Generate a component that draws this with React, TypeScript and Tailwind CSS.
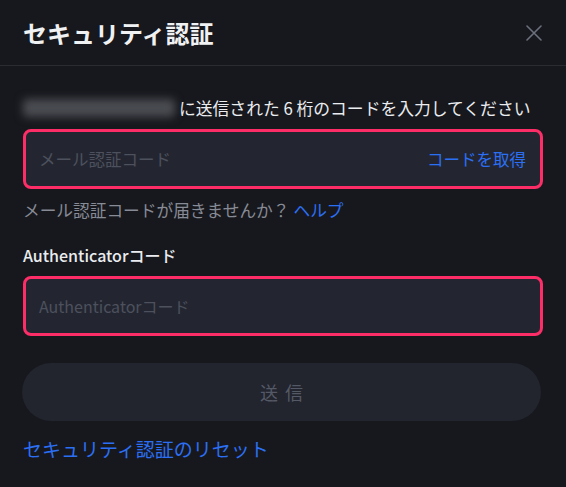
import React from "react";

export default function App() {
  const font = { fontFamily: '"Noto Sans CJK JP", "Noto Sans", sans-serif' };
  return (
    <div className="w-[566px] h-[487px] bg-[#17181d] text-[#eaecef] overflow-hidden" style={font}>
      <div className="h-[66px] flex items-center justify-between pl-[23px] pr-[24px] border-b border-[#2a2c34]">
        <h1 className="text-[24px] font-bold leading-none text-[#f0f1f3]">セキュリティ認証</h1>
        <svg width="16" height="16" viewBox="0 0 16 16" className="text-[#6b707c]">
          <path d="M1 1 L15 15 M15 1 L1 15" stroke="currentColor" strokeWidth="1.6" strokeLinecap="round" />
        </svg>
      </div>
      <div className="px-[23px] pt-[31px]">
        <div className="flex items-center h-[22px] text-[16.8px] leading-none">
          <span className="w-[152px] h-[18px] mr-[4px] rounded-sm bg-[#4a4c52] blur-[4px]"></span>
          <span className="text-[#eaecef]">に送信された 6 桁のコードを入力してください</span>
        </div>
        <div className="mt-[10px] h-[60px] rounded-[8px] border-[3px] border-[#fd2e67] bg-[#232631] flex items-center justify-between pl-[13px] pr-[14px]">
          <span className="text-[16.5px] text-[#4d515d]">メール認証コード</span>
          <span className="text-[16.5px] text-[#2b6ff4]">コードを取得</span>
        </div>
        <div className="mt-[11px] h-[22px] flex items-center text-[16.7px] text-[#878b96]">
          メール認証コードが届きませんか？<span className="ml-[4px] text-[#2b6ff4]">ヘルプ</span>
        </div>
        <div className="mt-[22px] h-[22px] flex items-center text-[16px] font-medium text-[#eaecef]">
          Authenticatorコード
        </div>
        <div className="mt-[10px] h-[60px] rounded-[8px] border-[3px] border-[#fd2e67] bg-[#232631] flex items-center pl-[13px]">
          <span className="text-[16px] text-[#4d515d]">Authenticatorコード</span>
        </div>
        <button className="mt-[27px] w-[519px] -ml-[1px] h-[58px] rounded-full bg-[#22242e] flex items-center justify-center gap-[7px] text-[18px] text-[#555966]">
          <span>送</span>
          <span>信</span>
        </button>
        <div className="mt-[16px] h-[24px] flex items-center text-[19px] text-[#2b6ff4]">
          セキュリティ認証のリセット
        </div>
      </div>
    </div>
  );
}
